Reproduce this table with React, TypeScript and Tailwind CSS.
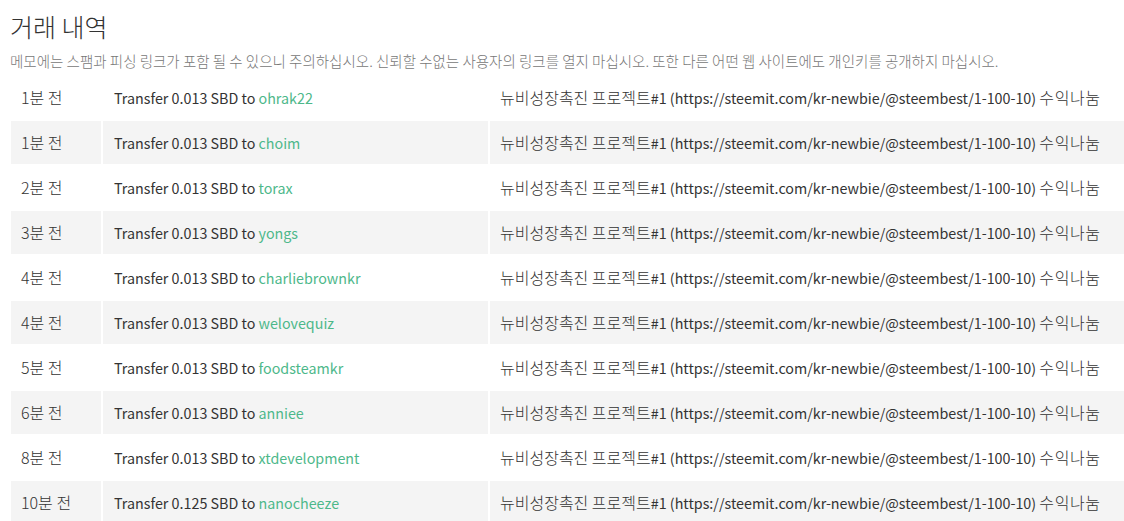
import React from 'react';

const transfers = [
  { when: '1분 전', amount: '0.013', to: 'ohrak22' },
  { when: '1분 전', amount: '0.013', to: 'choim' },
  { when: '2분 전', amount: '0.013', to: 'torax' },
  { when: '3분 전', amount: '0.013', to: 'yongs' },
  { when: '4분 전', amount: '0.013', to: 'charliebrownkr' },
  { when: '4분 전', amount: '0.013', to: 'welovequiz' },
  { when: '5분 전', amount: '0.013', to: 'foodsteamkr' },
  { when: '6분 전', amount: '0.013', to: 'anniee' },
  { when: '8분 전', amount: '0.013', to: 'xtdevelopment' },
  { when: '10분 전', amount: '0.125', to: 'nanocheeze' },
];

// korean glyphs render a bit larger (and lighter) than the latin ones in the original
const Ko: React.FC<{ children: React.ReactNode; wide?: boolean }> = ({ children, wide }) => (
  <span className={wide ? 'text-[16px] leading-none font-light tracking-[0.6px]' : 'text-[16px] leading-none font-light'}>
    {children}
  </span>
);

const Memo: React.FC = () => (
  <>
    <Ko>뉴비성장촉진 프로젝트</Ko>#1 (https://steemit.com/kr-newbie/@steembest/1-100-10) <Ko wide>수익나눔</Ko>
  </>
);

const App: React.FC = () => {
  return (
    <div
      className="w-[1124px] h-[521px] overflow-hidden bg-white text-[#333]"
      style={{ fontFamily: '"Noto Sans CJK KR", "Noto Sans", sans-serif' }}
    >
      <div className="pl-[10px] pt-[8px]">
        <h1 className="text-[25px] leading-[36px] font-light text-[#333]">거래 내역</h1>
        <p className="mt-[8px] text-[14.5px] leading-[18px] font-light text-[#777] whitespace-nowrap">
          메모에는 스팸과 피싱 링크가 포함 될 수 있으니 주의하십시오. 신뢰할 수없는 사용자의 링크를 열지 마십시오. 또한 다른 어떤 웹 사이트에도 개인키를 공개하지 마십시오.
        </p>
      </div>

      {/* Transfer history */}
      <table className="ml-[9px] mt-[4px] w-[1140px] border-separate border-spacing-[2px] text-[14.3px]">
        <tbody>
          {transfers.map((t, index) => (
            <tr key={index} className={index % 2 === 1 ? 'bg-[#f4f4f4]' : 'bg-white'}>
              <td className="w-[90px] h-[43px] px-[10px] align-middle whitespace-nowrap">
                <Ko>{t.when}</Ko>
              </td>
              <td className="w-[385px] h-[43px] px-[11px] align-middle whitespace-nowrap">
                Transfer {t.amount} SBD to <span className="text-[#4db88a]">{t.to}</span>
              </td>
              <td className="h-[43px] px-[10px] align-middle whitespace-nowrap">
                <Memo />
              </td>
            </tr>
          ))}
        </tbody>
      </table>
    </div>
  );
};

export default App;
